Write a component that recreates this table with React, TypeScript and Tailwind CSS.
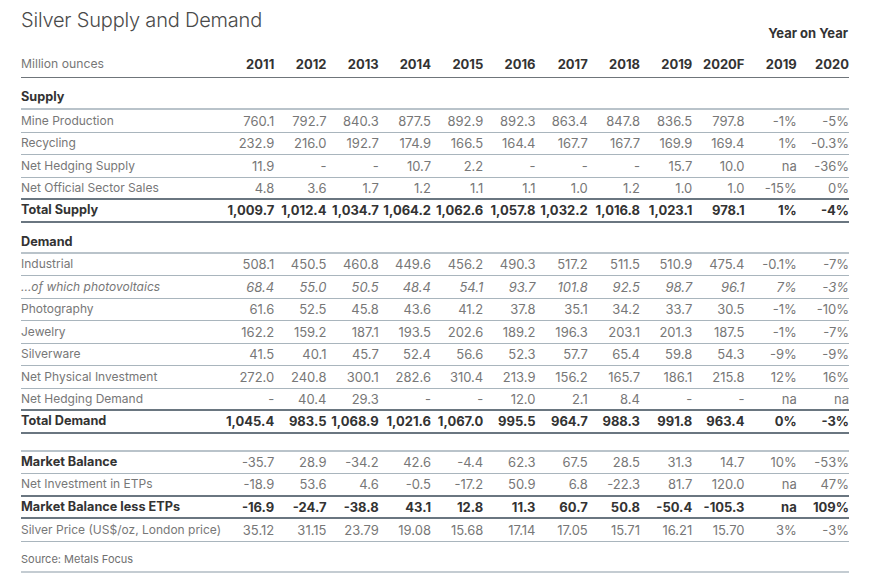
import React from "react";

type RowKind = "normal" | "italic" | "total" | "boldLabel";
type Border = "light" | "dark" | "none";

const F = { fontFamily: "Inter, 'Noto Sans', sans-serif" };

function Row({
  label,
  values,
  kind = "normal",
  border = "light",
}: {
  label: string;
  values: string[];
  kind?: RowKind;
  border?: Border;
}) {
  const borderCls =
    border === "dark"
      ? "border-b-2 border-[#6a7680]"
      : border === "light"
      ? "border-b border-[#a9b5bd]"
      : "";
  const labelCls =
    kind === "total" || kind === "boldLabel"
      ? "font-bold text-[#333] text-[12.7px]"
      : kind === "italic"
      ? "italic text-[#777] text-[12px]"
      : "text-[#777] text-[12px]";
  const valCls =
    kind === "total"
      ? "font-bold text-[#333]"
      : kind === "italic"
      ? "italic text-[#777]"
      : "text-[#777]";
  return (
    <div
      className={`grid grid-cols-[201px_repeat(12,minmax(0,1fr))] h-[22.5px] items-center text-[13px] leading-[16px] ${borderCls}`}
    >
      <div className={`whitespace-nowrap ${labelCls}`}>{label}</div>
      {values.map((v, i) => (
        <div key={i} className={`text-right whitespace-nowrap ${valCls}`}>
          {v}
        </div>
      ))}
    </div>
  );
}

function Section({ title }: { title: string }) {
  return (
    <div className="h-[31px] flex items-end pb-[2px] border-b-2 border-[#b9c3ca] text-[12.7px] leading-[16px] font-bold text-[#333]">
      {title}
    </div>
  );
}

export default function App() {
  const years = ["2011", "2012", "2013", "2014", "2015", "2016", "2017", "2018", "2019", "2020F", "2019", "2020"];
  return (
    <div className="w-[883px] h-[581px] bg-white" style={F}>
      <div className="ml-[21px] w-[828px]">
        <div className="h-[44px] flex justify-between">
          <div className="mt-[7px] text-[20px] leading-[26px] font-light text-[#4a4a4a] tracking-[-0.2px]">
            Silver Supply and Demand
          </div>
          <div className="self-end mb-[3px] text-[13px] leading-[16px] font-bold text-[#333] pr-[1px]">
            Year on Year
          </div>
        </div>
        <div className="h-[34px] grid grid-cols-[201px_repeat(12,minmax(0,1fr))] items-end pb-[5px] border-b border-[#6f757a] text-[13px] leading-[16px]">
          <div className="text-[#777] text-[12.2px]">Million ounces</div>
          {years.map((y, i) => (
            <div key={i} className="text-right font-bold text-[#333]">
              {y}
            </div>
          ))}
        </div>
        <div className="h-[32px] flex items-end pb-[3px] border-b-2 border-[#b9c3ca] text-[12.7px] leading-[16px] font-bold text-[#333]">
          Supply
        </div>
        <Row label="Mine Production" values={["760.1", "792.7", "840.3", "877.5", "892.9", "892.3", "863.4", "847.8", "836.5", "797.8", "-1%", "-5%"]} />
        <Row label="Recycling" values={["232.9", "216.0", "192.7", "174.9", "166.5", "164.4", "167.7", "167.7", "169.9", "169.4", "1%", "-0.3%"]} />
        <Row label="Net Hedging Supply" values={["11.9", "-", "-", "10.7", "2.2", "-", "-", "-", "15.7", "10.0", "na", "-36%"]} />
        <Row label="Net Official Sector Sales" border="dark" values={["4.8", "3.6", "1.7", "1.2", "1.1", "1.1", "1.0", "1.2", "1.0", "1.0", "-15%", "0%"]} />
        <Row label="Total Supply" kind="total" border="dark" values={["1,009.7", "1,012.4", "1,034.7", "1,064.2", "1,062.6", "1,057.8", "1,032.2", "1,016.8", "1,023.1", "978.1", "1%", "-4%"]} />
        <Section title="Demand" />
        <Row label="Industrial" values={["508.1", "450.5", "460.8", "449.6", "456.2", "490.3", "517.2", "511.5", "510.9", "475.4", "-0.1%", "-7%"]} />
        <Row label="...of which photovoltaics" kind="italic" values={["68.4", "55.0", "50.5", "48.4", "54.1", "93.7", "101.8", "92.5", "98.7", "96.1", "7%", "-3%"]} />
        <Row label="Photography" values={["61.6", "52.5", "45.8", "43.6", "41.2", "37.8", "35.1", "34.2", "33.7", "30.5", "-1%", "-10%"]} />
        <Row label="Jewelry" values={["162.2", "159.2", "187.1", "193.5", "202.6", "189.2", "196.3", "203.1", "201.3", "187.5", "-1%", "-7%"]} />
        <Row label="Silverware" values={["41.5", "40.1", "45.7", "52.4", "56.6", "52.3", "57.7", "65.4", "59.8", "54.3", "-9%", "-9%"]} />
        <Row label="Net Physical Investment" values={["272.0", "240.8", "300.1", "282.6", "310.4", "213.9", "156.2", "165.7", "186.1", "215.8", "12%", "16%"]} />
        <Row label="Net Hedging Demand" border="dark" values={["-", "40.4", "29.3", "-", "-", "12.0", "2.1", "8.4", "-", "-", "na", "na"]} />
        <Row label="Total Demand" kind="total" border="dark" values={["1,045.4", "983.5", "1,068.9", "1,021.6", "1,067.0", "995.5", "964.7", "988.3", "991.8", "963.4", "0%", "-3%"]} />
        <div className="h-[18px] border-b-2 border-[#b9c3ca]" />
        <Row label="Market Balance" kind="boldLabel" values={["-35.7", "28.9", "-34.2", "42.6", "-4.4", "62.3", "67.5", "28.5", "31.3", "14.7", "10%", "-53%"]} />
        <Row label="Net Investment in ETPs" border="dark" values={["-18.9", "53.6", "4.6", "-0.5", "-17.2", "50.9", "6.8", "-22.3", "81.7", "120.0", "na", "47%"]} />
        <Row label="Market Balance less ETPs" kind="total" border="dark" values={["-16.9", "-24.7", "-38.8", "43.1", "12.8", "11.3", "60.7", "50.8", "-50.4", "-105.3", "na", "109%"]} />
        <Row label="Silver Price (US$/oz, London price)" values={["35.12", "31.15", "23.79", "19.08", "15.68", "17.14", "17.05", "15.71", "16.21", "15.70", "3%", "-3%"]} />
        <div className="h-[31px] flex items-center pt-[5px] border-b-2 border-[#c4ccd2] text-[11px] leading-[14px] text-[#6f6f6f]">
          Source: Metals Focus
        </div>
      </div>
    </div>
  );
}
